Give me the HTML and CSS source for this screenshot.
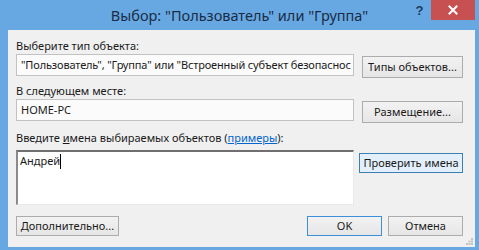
FILE: index.html
```html
<!DOCTYPE html>
<html lang="ru">
<head>
<meta charset="utf-8">
<link rel="stylesheet" href="styles.css">
</head>
<body>
<div class="window">
  <div class="titlebar">
    <div class="title">Выбор: "Пользователь" или "Группа"</div>
    <div class="help">?</div>
    <div class="close">
      <svg width="10" height="10" viewBox="0 0 10 10"><path d="M1.5 1.5 L8.5 8.5 M8.5 1.5 L1.5 8.5" stroke="#fff" stroke-width="2" stroke-linecap="square"/></svg>
    </div>
  </div>
  <div class="client">
    <div class="label first">Выберите тип объекта:</div>
    <div class="row">
      <div class="field tight">"Пользователь", "Группа" или "Встроенный субъект безопаснос</div>
      <div class="btn side">Типы объектов...</div>
    </div>
    <div class="label second">В следующем месте:</div>
    <div class="row">
      <div class="field">HOME-PC</div>
      <div class="btn side">Размещение...</div>
    </div>
    <div class="label third">Введите <u>и</u>мена выбираемых объектов (<a class="link">примеры</a>):</div>
    <div class="row area-row">
      <div class="area"><span>Андрей</span><span class="caret"></span></div>
      <div class="btn check">Проверить имена</div>
    </div>
    <div class="bottom">
      <div class="btn adv">Дополнительно...</div>
      <div class="spacer"></div>
      <div class="btn ok">OK</div>
      <div class="btn cancel">Отмена</div>
    </div>
    <svg class="grip" width="7" height="7" viewBox="0 0 7 7">
      <rect x="5" y="0" width="2" height="2" fill="#c4c4c4"/>
      <rect x="2.5" y="2.5" width="2" height="2" fill="#c4c4c4"/>
      <rect x="5" y="2.5" width="2" height="2" fill="#c4c4c4"/>
      <rect x="0" y="5" width="2" height="2" fill="#c4c4c4"/>
      <rect x="2.5" y="5" width="2" height="2" fill="#c4c4c4"/>
      <rect x="5" y="5" width="2" height="2" fill="#c4c4c4"/>
    </svg>
  </div>
</div>
</body>
</html>
```

FILE: styles.css
```css
* { box-sizing: border-box; }
html, body { margin: 0; padding: 0; }
body {
  width: 479px;
  height: 250px;
  overflow: hidden;
  font-family: "Noto Sans", "Open Sans", sans-serif;
  font-size: 11px;
  color: #1a1a1a;
}
.window {
  width: 479px;
  height: 250px;
  background: #67a8e3;
  display: flex;
  flex-direction: column;
  padding: 0 4px 3px 8px;
}
.titlebar {
  height: 30px;
  display: flex;
  align-items: flex-start;
  margin-left: -8px;
  margin-right: -4px;
}
.title {
  flex: 1;
  text-align: center;
  padding-left: 71px;
  font-size: 14.5px;
  line-height: 31px;
  color: #1a2c44;
  white-space: nowrap;
}
.help {
  width: 23px;
  height: 20px;
  font-size: 13px;
  font-weight: bold;
  line-height: 22px;
  text-align: center;
  color: #1c3c63;
  font-family: "Liberation Sans", sans-serif;
}
.close {
  width: 44px;
  height: 20px;
  margin-right: 4px;
  background: #c75050;
  display: flex;
  align-items: center;
  justify-content: center;
}
.client {
  flex: 1;
  position: relative;
  background: #f0f0f0;
  padding: 8px 12px 0 8px;
  display: flex;
  flex-direction: column;
}
.label {
  height: 16px;
  line-height: 16px;
  white-space: nowrap;
}
.label.second { margin-top: 5px; }
.label.third { margin-top: 7px; }
.link { color: #0066cc; text-decoration: underline; }
.row {
  display: flex;
  align-items: flex-start;
}
.field {
  width: 338px;
  height: 22px;
  line-height: 20px;
  border: 1px solid #c2c2c2;
  background: #fbfbfb;
  padding: 0 4px;
  white-space: nowrap;
  overflow: hidden;
}
.field.tight { letter-spacing: -0.15px; }
.btn {
  height: 20px;
  line-height: 18px;
  text-align: center;
  border: 1px solid #acacac;
  background: linear-gradient(#f2f2f2, #e6e6e6);
  white-space: nowrap;
}
.btn.side {
  width: 101px;
  height: 22px;
  line-height: 20px;
  margin-left: 8px;
  margin-top: 2px;
}
.area-row { margin-top: 4px; }
.area {
  width: 338px;
  height: 55px;
  background: #fff;
  border-style: solid;
  border-width: 2px 1px 1px 2px;
  border-color: #6f6f6f #e8e8e8 #e8e8e8 #8a8a8a;
  padding: 1px 2px;
  line-height: 16px;
  display: flex;
  align-items: flex-start;
}
.caret {
  display: inline-block;
  width: 1px;
  height: 15px;
  margin-top: 1px;
  background: #000;
}
.btn.check {
  width: 104px;
  margin-left: 5px;
  margin-top: 3px;
  background: #e3f0fb;
  border-color: #3c7fb1;
}
.bottom {
  display: flex;
  margin-top: 11px;
}
.btn.adv { width: 103px; }
.spacer { flex: 1; }
.btn.ok {
  width: 75px;
  border-color: #3c8fd8;
}
.btn.cancel {
  width: 75px;
  margin-left: 6px;
}
.grip {
  position: absolute;
  right: 2px;
  bottom: 2px;
}
```
